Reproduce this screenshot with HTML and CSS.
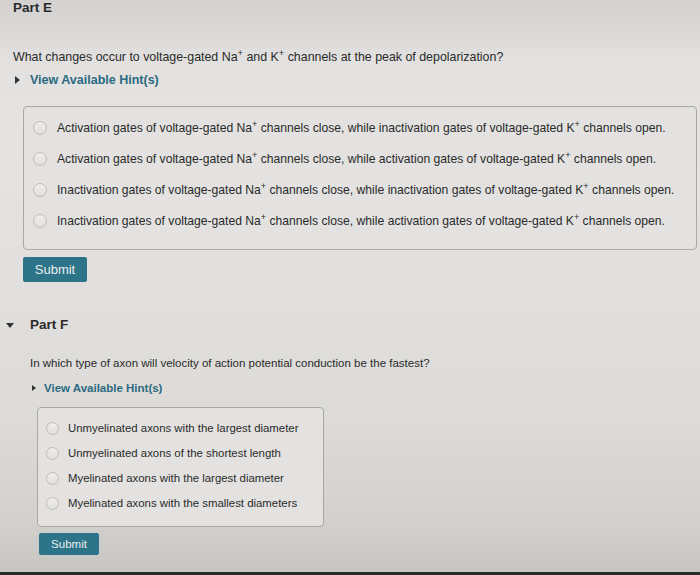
FILE: index.html
```html
<!DOCTYPE html>
<html>
<head>
<meta charset="utf-8">
<link rel="stylesheet" href="styles.css">
</head>
<body>
<div class="screen">
  <section class="part part-e">
    <h2 class="part-title">Part E</h2>
    <p class="question">What changes occur to voltage-gated Na<sup>+</sup> and K<sup>+</sup> channels at the peak of depolarization?</p>
    <div class="hint"><span class="tri-right"></span><span class="hint-text">View Available Hint(s)</span></div>
    <div class="choices">
      <label class="choice"><span class="radio"></span><span>Activation gates of voltage-gated Na<sup>+</sup> channels close, while inactivation gates of voltage-gated K<sup>+</sup> channels open.</span></label>
      <label class="choice"><span class="radio"></span><span>Activation gates of voltage-gated Na<sup>+</sup> channels close, while activation gates of voltage-gated K<sup>+</sup> channels open.</span></label>
      <label class="choice"><span class="radio"></span><span>Inactivation gates of voltage-gated Na<sup>+</sup> channels close, while inactivation gates of voltage-gated K<sup>+</sup> channels open.</span></label>
      <label class="choice"><span class="radio"></span><span>Inactivation gates of voltage-gated Na<sup>+</sup> channels close, while activation gates of voltage-gated K<sup>+</sup> channels open.</span></label>
    </div>
    <button class="submit">Submit</button>
  </section>

  <section class="part part-f">
    <div class="part-head"><span class="tri-down"></span><h2 class="part-title">Part F</h2></div>
    <div class="part-body">
      <p class="question">In which type of axon will velocity of action potential conduction be the fastest?</p>
      <div class="hint"><span class="tri-right"></span><span class="hint-text">View Available Hint(s)</span></div>
      <div class="choices">
        <label class="choice"><span class="radio"></span><span>Unmyelinated axons with the largest diameter</span></label>
        <label class="choice"><span class="radio"></span><span>Unmyelinated axons of the shortest length</span></label>
        <label class="choice"><span class="radio"></span><span>Myelinated axons with the largest diameter</span></label>
        <label class="choice"><span class="radio"></span><span>Myelinated axons with the smallest diameters</span></label>
      </div>
      <button class="submit">Submit</button>
    </div>
  </section>
  <div class="bezel"></div>
</div>
</body>
</html>
```

FILE: styles.css
```css
* { box-sizing: border-box; }
html, body { margin: 0; padding: 0; }
body {
  width: 700px;
  height: 575px;
  overflow: hidden;
  font-family: "Liberation Sans", Arial, sans-serif;
  color: #2a2a2a;
}
.screen {
  width: 700px;
  height: 575px;
  display: flex;
  flex-direction: column;
  position: relative;
  background: linear-gradient(180deg, #d3d2d0 0px, #d9d8d6 28px, #e2e1df 60px, #e5e4e2 140px, #e0dfdd 300px, #dcdbd8 420px, #d2d1ce 520px, #c6c5c2 570px);
}
.part { display: flex; flex-direction: column; align-items: flex-start; }
.part-title {
  margin: 0;
  font-size: 13.5px;
  line-height: 16px;
  font-weight: bold;
  color: #2a2a2a;
}
.question { margin: 0; color: #2a2a2a; }
sup { font-size: 0.75em; line-height: 0; vertical-align: 0.5em; }
.hint { display: flex; align-items: center; }
.hint-text { font-weight: bold; color: #2b6a80; }
.tri-right {
  width: 0; height: 0;
  border-top: 4px solid transparent;
  border-bottom: 4px solid transparent;
  border-left: 5px solid #333;
}
.tri-down {
  width: 0; height: 0;
  border-left: 4px solid transparent;
  border-right: 4px solid transparent;
  border-top: 5px solid #333;
}
.choices {
  display: flex;
  flex-direction: column;
  border: 1px solid #a9a8a5;
  border-radius: 4px;
  background: #e3e2e0;
}
.choice { display: flex; align-items: center; color: #2a2a2a; white-space: nowrap; }
.radio {
  flex: none;
  border-radius: 50%;
  border: 1px solid #bdbcb9;
  background: linear-gradient(180deg, #efeeec, #e0dfdd);
}
.submit {
  border: none;
  border-radius: 2px;
  background: #2d7488;
  color: #e9eff1;
  font-family: "Liberation Sans", Arial, sans-serif;
  padding: 0;
}

/* Part E */
.part-e { padding-left: 13px; }
.part-e .question { margin-top: 33px; font-size: 12.4px; line-height: 16px; }
.part-e .hint { margin-top: 7px; height: 16px; padding-left: 2px; }
.part-e .hint-text { font-size: 12.5px; margin-left: 10px; }
.part-e .choices {
  margin-top: 18px;
  margin-left: 10px;
  width: 674px;
  height: 144px;
  padding: 11px 0 0 9px;
  gap: 11px;
}
.part-e .choice { height: 20px; font-size: 12.15px; }
.part-e .radio { width: 14px; height: 14px; margin-right: 10px; }
.part-e .submit { margin-top: 7px; margin-left: 10px; width: 64px; height: 25px; font-size: 13px; }

/* Part F */
.part-f { margin-top: 35px; }
.part-head { display: flex; align-items: center; height: 16px; }
.part-head .tri-down { margin-left: 6px; }
.part-head .part-title { margin-left: 16px; }
.part-body { display: flex; flex-direction: column; align-items: flex-start; padding-left: 30px; }
.part-f .question { margin-top: 22px; font-size: 11.5px; line-height: 16px; }
.part-f .hint { margin-top: 9px; height: 16px; padding-left: 2px; }
.part-f .tri-right { border-top-width: 3.5px; border-bottom-width: 3.5px; border-left-width: 4.5px; }
.part-f .hint-text { font-size: 11.5px; margin-left: 8px; }
.part-f .choices {
  margin-top: 11px;
  margin-left: 7px;
  width: 287px;
  height: 120px;
  padding: 11px 0 0 8px;
  gap: 7px;
}
.part-f .choice { height: 18px; font-size: 11.4px; }
.part-f .radio { width: 13px; height: 13px; margin-right: 9px; }
.part-f .submit { margin-top: 6px; margin-left: 9px; width: 60px; height: 22px; font-size: 11.5px; }

.bezel {
  position: absolute;
  left: 0; right: 0; bottom: 0;
  height: 3px;
  background: #2a2a2a;
}
```
